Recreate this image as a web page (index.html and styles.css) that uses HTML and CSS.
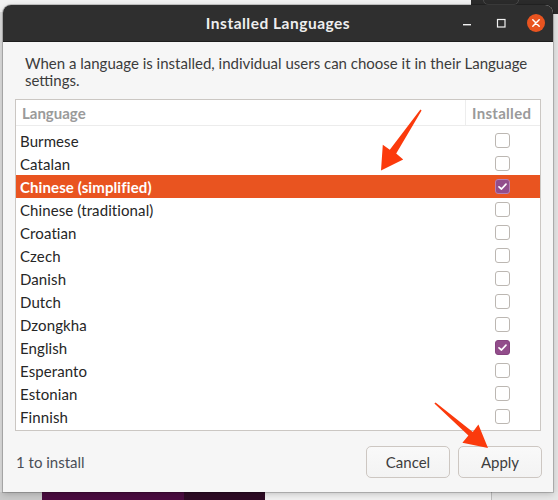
FILE: index.html
```html
<!DOCTYPE html>
<html>
<head>
<meta charset="utf-8">
<title>Installed Languages</title>
<link rel="stylesheet" href="styles.css">
</head>
<body>
<div class="desktop">
  <div class="bg-top"></div>
  <div class="bg-topdark"><div class="bg-tab"></div></div>
  <div class="bg-left"></div>
  <div class="bg-right"></div>
  <div class="bg-bottom">
    <div class="seg seg-gray"></div>
    <div class="seg seg-purple"></div>
    <div class="seg seg-dark"></div>
    <div class="seg seg-light"></div>
    <div class="seg seg-light2"></div>
  </div>

  <div class="window">
    <header class="titlebar">
      <span class="title">Installed Languages</span>
      <div class="controls">
        <span class="ctl ctl-min"><svg width="10" height="10" viewBox="0 0 10 10"><rect x="1" y="6" width="8" height="1.4" fill="#f2f2f2"/></svg></span>
        <span class="ctl ctl-max"><svg width="10" height="10" viewBox="0 0 10 10"><rect x="1.5" y="1.5" width="7.5" height="7.5" fill="none" stroke="#f2f2f2" stroke-width="1.2"/></svg></span>
        <span class="ctl ctl-close"><svg width="18" height="18" viewBox="0 0 18 18"><circle cx="9" cy="9" r="9" fill="#e95420"/><path d="M5.8 5.8 L12.2 12.2 M12.2 5.8 L5.8 12.2" stroke="#fff" stroke-width="1.5" stroke-linecap="round"/></svg></span>
      </div>
    </header>
    <div class="content">
      <p class="intro">When a language is installed, individual users can choose it in their Language<br>settings.</p>
      <div class="listbox">
        <div class="list-head">
          <span class="col-lang">Language</span>
          <span class="col-inst">Installed</span>
        </div>
        <div class="list-scroll">
          <div class="rows">
            <div class="row"><span class="name">Burmese</span><span class="cell"><span class="check"></span></span></div>
            <div class="row"><span class="name">Catalan</span><span class="cell"><span class="check"></span></span></div>
            <div class="row selected"><span class="name">Chinese (simplified)</span><span class="cell"><span class="check on"><svg width="13" height="13" viewBox="0 0 13 13"><path d="M3 6.8 L5.5 9 L10 4.2" fill="none" stroke="#fff" stroke-width="1.7" stroke-linecap="round" stroke-linejoin="round"/></svg></span></span></div>
            <div class="row"><span class="name">Chinese (traditional)</span><span class="cell"><span class="check"></span></span></div>
            <div class="row"><span class="name">Croatian</span><span class="cell"><span class="check"></span></span></div>
            <div class="row"><span class="name">Czech</span><span class="cell"><span class="check"></span></span></div>
            <div class="row"><span class="name">Danish</span><span class="cell"><span class="check"></span></span></div>
            <div class="row"><span class="name">Dutch</span><span class="cell"><span class="check"></span></span></div>
            <div class="row"><span class="name">Dzongkha</span><span class="cell"><span class="check"></span></span></div>
            <div class="row"><span class="name">English</span><span class="cell"><span class="check on"><svg width="13" height="13" viewBox="0 0 13 13"><path d="M3 6.8 L5.5 9 L10 4.2" fill="none" stroke="#fff" stroke-width="1.7" stroke-linecap="round" stroke-linejoin="round"/></svg></span></span></div>
            <div class="row"><span class="name">Esperanto</span><span class="cell"><span class="check"></span></span></div>
            <div class="row"><span class="name">Estonian</span><span class="cell"><span class="check"></span></span></div>
            <div class="row"><span class="name">Finnish</span><span class="cell"><span class="check"></span></span></div>
            <div class="row"><span class="name"></span><span class="cell"><span class="check"></span></span></div>
          </div>
        </div>
      </div>
      <div class="footer">
        <span class="status">1 to install</span>
        <div class="buttons">
          <button class="btn btn-cancel">Cancel</button>
          <button class="btn btn-apply">Apply</button>
        </div>
      </div>
    </div>
  </div>

  <svg class="annot" width="558" height="500" viewBox="0 0 558 500">
    <polygon points="421.6,110.4 396.2,153.6 403.2,159.4 381,170.5 382.8,144.8 389.8,149.8 420.4,109.6" fill="#fb3a0c"/>
    <polygon points="435.6,402.6 472.8,432 478.4,424.4 488,448 462.4,442.8 468.4,435.6 434.4,403.4" fill="#fb3a0c"/>
  </svg>
</div>
</body>
</html>
```

FILE: styles.css
```css
* { box-sizing: border-box; }
html, body { margin: 0; padding: 0; }
body {
  width: 558px;
  height: 500px;
  overflow: hidden;
  font-family: "Lato", "Liberation Sans", sans-serif;
  background: #e9e9e9;
}
.desktop {
  position: relative;
  width: 558px;
  height: 500px;
  overflow: hidden;
  background: #e9e9e9;
}
.bg-top {
  position: absolute; left: 0; top: 0; width: 471px; height: 12px;
  background: #f1f1f1;
}
.bg-topdark {
  position: absolute; left: 471px; top: 0; width: 87px; height: 14px;
  background: #2b2b2b;
}
.bg-tab {
  position: absolute; left: 12px; top: -6px; width: 36px; height: 11px;
  border: 1px solid #4a4a4a; border-radius: 5px;
}
.bg-left {
  position: absolute; left: 0; top: 12px; width: 4px; height: 480px;
  background: #dcdcdc;
  border-right: 1px solid #b5b5b5;
}
.bg-right {
  position: absolute; right: 0; top: 14px; width: 6px; height: 480px;
  background: #e4e4e4;
}
.bg-bottom {
  position: absolute; left: 0; top: 492px; width: 558px; height: 8px;
  display: flex;
}
.seg { height: 8px; }
.seg-gray { width: 42px; background: #c9c9c9; }
.seg-purple { width: 142px; background: #4b0c40; }
.seg-dark { width: 81px; background: #2e0b25; }
.seg-light { width: 227px; background: #f0f0f0; border-right: 1px solid #bdbdbd; }
.seg-light2 { flex: 1; background: #e6e6e6; }

.window {
  position: absolute;
  left: 3px; top: 5px;
  width: 550px; height: 487px;
  background: #f6f6f6;
  border-radius: 8px 8px 0 0;
  box-shadow: 0 0 0 1px rgba(0,0,0,0.18), 0 2px 6px rgba(0,0,0,0.2);
  display: flex;
  flex-direction: column;
}
.titlebar {
  height: 37px;
  flex: none;
  background: #2f2f2f;
  border-radius: 8px 8px 0 0;
  border-bottom: 1px solid #1e1e1e;
  display: flex;
  align-items: center;
  justify-content: center;
  position: relative;
}
.title {
  color: #eeeeee;
  font-weight: bold;
  font-size: 15.5px;
  letter-spacing: 0.5px;
}
.controls {
  position: absolute;
  right: 8px; top: 9px;
  display: flex;
  align-items: center;
  gap: 0;
}
.ctl { display: flex; align-items: center; justify-content: center; }
.ctl-min { width: 10px; height: 18px; margin-right: 24px; }
.ctl-max { width: 10px; height: 18px; margin-right: 21px; }
.ctl-close { width: 18px; height: 18px; }

.content {
  flex: 1;
  display: flex;
  flex-direction: column;
  padding: 13px 12px 13px 12px;
}
.intro {
  margin: 0 0 0 10px;
  font-size: 15px;
  line-height: 17px;
  color: #3c3c3c;
}
.listbox {
  margin-top: 10px;
  border: 1px solid #cbc7c3;
  background: #ffffff;
  display: flex;
  flex-direction: column;
}
.list-head {
  height: 26px;
  border-bottom: 1px solid #ececec;
  display: flex;
  align-items: stretch;
  font-weight: bold;
  font-size: 15px;
  color: #9a9a9a;
}
.col-lang {
  flex: 1;
  padding-left: 6px;
  display: flex;
  align-items: center;
}
.col-inst {
  width: 75px;
  border-left: 1px solid #ededed;
  padding-left: 6px;
  display: flex;
  align-items: center;
  letter-spacing: 0.3px;
}
.list-scroll {
  height: 304px;
  overflow: hidden;
}
.rows { margin-top: 3px; }
.row {
  height: 23px;
  display: flex;
  align-items: center;
  font-size: 15px;
  color: #262626;
  letter-spacing: 0.1px;
}
.row .name { flex: 1; padding-left: 4px; }
.row .cell {
  width: 75px;
  display: flex;
  justify-content: center;
}
.row.selected {
  background: #e95420;
  color: #ffffff;
  font-weight: bold;
}
.check {
  width: 15px;
  height: 15px;
  border: 1px solid #bcb7b2;
  border-radius: 3px;
  background: #ffffff;
  display: flex;
  align-items: center;
  justify-content: center;
}
.check.on {
  background: #924d8b;
  border-color: #86437f;
}
.row.selected .check.on { border-color: #b77fb1; }

.footer {
  margin-top: 15px;
  display: flex;
  align-items: center;
  justify-content: space-between;
}
.status {
  padding-left: 1px;
  font-size: 15px;
  color: #4a4e56;
}
.buttons {
  display: flex;
  gap: 8px;
}
.btn {
  height: 32px;
  border: 1px solid #cdc7c2;
  border-radius: 5px;
  background: linear-gradient(#f9f9f9, #f3f3f3);
  font-family: inherit;
  font-size: 15px;
  color: #3d3d3d;
  padding: 0;
}
.btn-cancel { width: 84px; }
.btn-apply { width: 84px; margin-right: -1px; }

.annot {
  position: absolute;
  left: 0; top: 0;
  pointer-events: none;
}
```
